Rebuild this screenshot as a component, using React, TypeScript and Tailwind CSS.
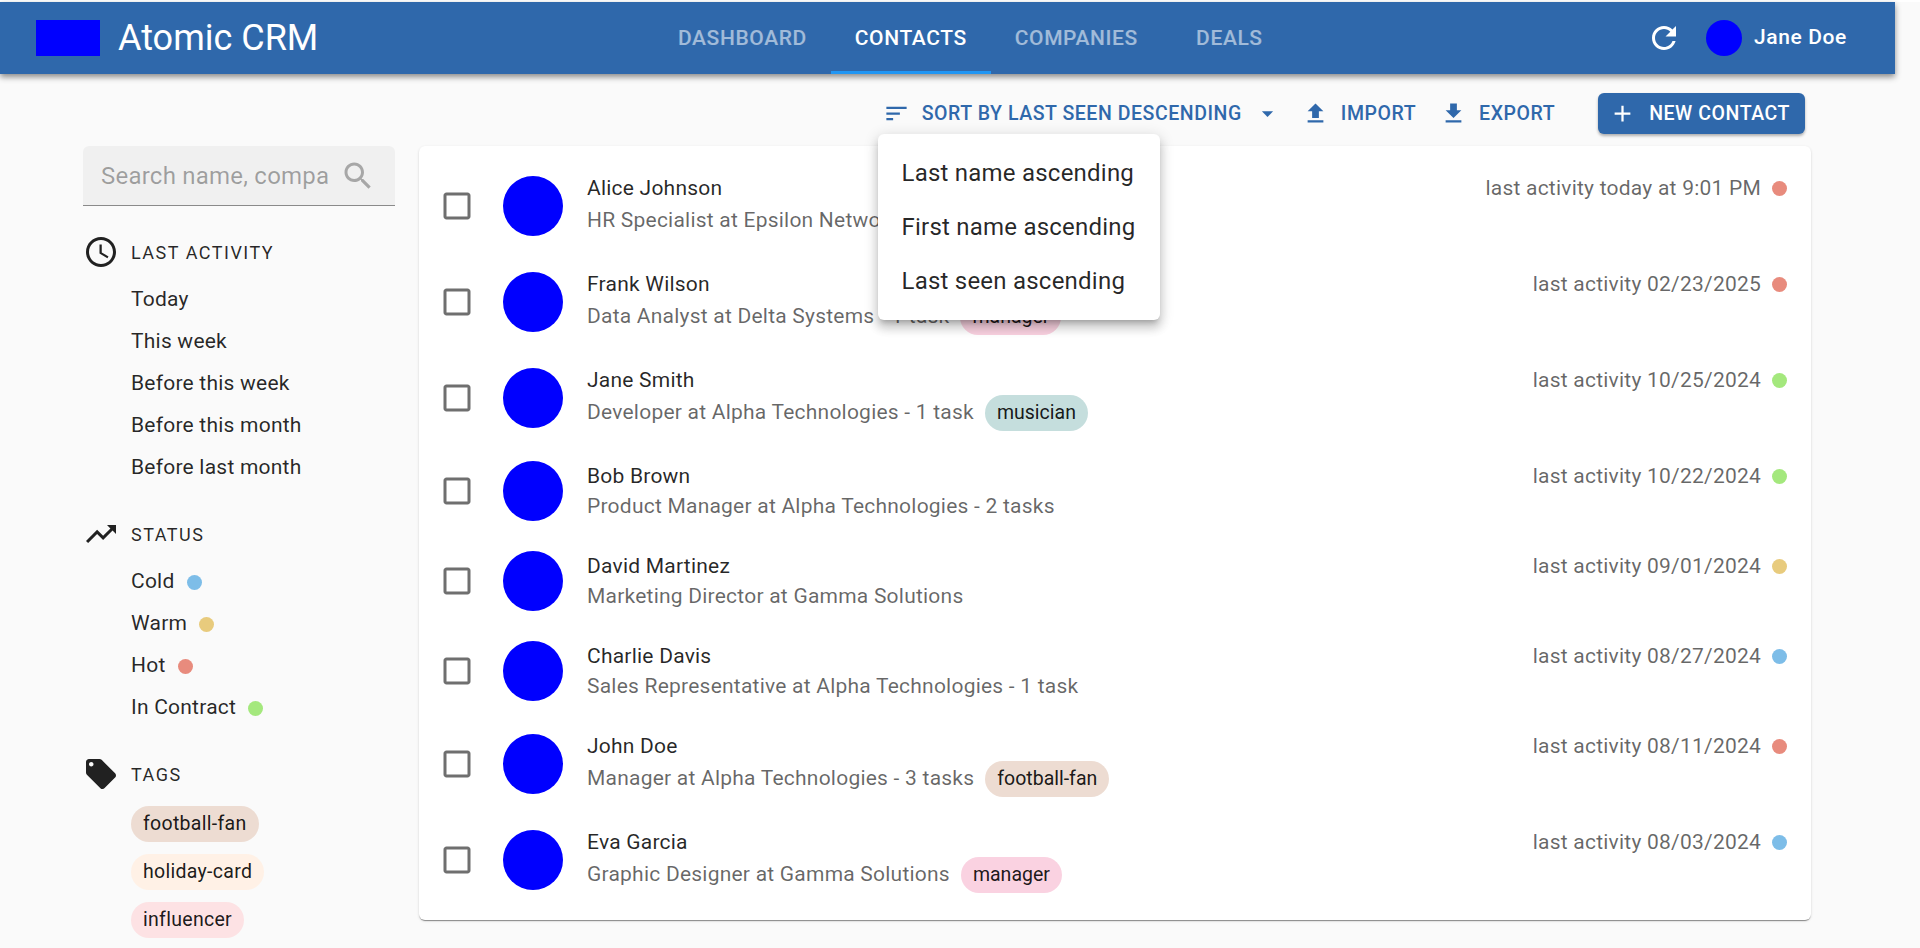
import React from "react";

const icons = {
  refresh: "M17.65 6.35C16.2 4.9 14.21 4 12 4c-4.42 0-7.99 3.58-7.99 8s3.57 8 7.99 8c3.73 0 6.84-2.55 7.73-6h-2.08c-.82 2.33-3.04 4-5.65 4-3.31 0-6-2.69-6-6s2.69-6 6-6c1.66 0 3.14.69 4.22 1.78L13 11h7V4l-2.35 2.35z",
  sort: "M3 18h6v-2H3v2zM3 6v2h18V6H3zm0 7h12v-2H3v2z",
  dropdown: "M7 10l5 5 5-5z",
  upload: "M9 16h6v-6h4l-7-7-7 7h4zm-4 2h14v2H5z",
  download: "M19 9h-4V3H9v6H5l7 7 7-7zM5 18v2h14v-2H5z",
  add: "M19 13h-6v6h-2v-6H5v-2h6V5h2v6h6v2z",
  search: "M15.5 14h-.79l-.28-.27C15.41 12.59 16 11.11 16 9.5 16 5.91 13.09 3 9.5 3S3 5.91 3 9.5 5.91 16 9.5 16c1.61 0 3.09-.59 4.23-1.57l.27.28v.79l5 4.99L20.49 19l-4.99-5zm-6 0C7.01 14 5 11.99 5 9.5S7.01 5 9.5 5 14 7.01 14 9.5 11.99 14 9.5 14z",
  checkbox: "M19 5v14H5V5h14m0-2H5c-1.1 0-2 .9-2 2v14c0 1.1.9 2 2 2h14c1.1 0 2-.9 2-2V5c0-1.1-.9-2-2-2z",
  clock: "M11.99 2C6.47 2 2 6.48 2 12s4.47 10 9.99 10C17.52 22 22 17.52 22 12S17.52 2 11.99 2zM12 20c-4.42 0-8-3.58-8-8s3.58-8 8-8 8 3.58 8 8-3.58 8-8 8zm.5-13H11v6l5.25 3.15.75-1.23-4.5-2.67z",
  trending: "M16 6l2.29 2.29-4.88 4.88-4-4L2 16.59 3.41 18l6-6 4 4 6.3-6.29L22 12V6z",
  tag: "M21.41 11.58l-9-9C12.05 2.22 11.55 2 11 2H4c-1.1 0-2 .9-2 2v7c0 .55.22 1.05.59 1.42l9 9c.36.36.86.58 1.41.58.55 0 1.05-.22 1.41-.59l7-7c.37-.36.59-.86.59-1.41 0-.55-.23-1.06-.59-1.42zM5.5 7C4.67 7 4 6.33 4 5.5S4.67 4 5.5 4 7 4.67 7 5.5 6.33 7 5.5 7z",
};

const Icon = ({ name, className }: { name: keyof typeof icons; className?: string }) => (
  <svg viewBox="0 0 24 24" fill="currentColor" className={className}>
    <path d={icons[name]} />
  </svg>
);

const Dot = ({ color }: { color: string }) => (
  <span className={`inline-block w-[15px] h-[15px] rounded-full shrink-0 ${color}`} />
);

const Chip = ({ label, color, className }: { label: string; color: string; className?: string }) => (
  <span className={`inline-flex items-center h-9 px-3 rounded-full text-[19.5px] text-black/90 ${color} ${className ?? ""}`}>{label}</span>
);

const COLD = "bg-[#7dbde8]";
const WARM = "bg-[#e8cb7d]";
const HOT = "bg-[#e88b7d]";
const CONTRACT = "bg-[#a4e87d]";

const contacts = [
  { name: "Alice Johnson", sub: "HR Specialist at Epsilon Networks", when: "last activity today at 9:01 PM", dot: HOT, tall: true },
  { name: "Frank Wilson", sub: "Data Analyst at Delta Systems - 1 task", when: "last activity 02/23/2025", dot: HOT, tag: "manager", tagColor: "bg-[#fad2e1]", tall: true },
  { name: "Jane Smith", sub: "Developer at Alpha Technologies - 1 task", when: "last activity 10/25/2024", dot: CONTRACT, tag: "musician", tagColor: "bg-[#c5dedd]", tall: true },
  { name: "Bob Brown", sub: "Product Manager at Alpha Technologies - 2 tasks", when: "last activity 10/22/2024", dot: CONTRACT },
  { name: "David Martinez", sub: "Marketing Director at Gamma Solutions", when: "last activity 09/01/2024", dot: WARM },
  { name: "Charlie Davis", sub: "Sales Representative at Alpha Technologies - 1 task", when: "last activity 08/27/2024", dot: COLD },
  { name: "John Doe", sub: "Manager at Alpha Technologies - 3 tasks", when: "last activity 08/11/2024", dot: HOT, tag: "football-fan", tagColor: "bg-[#eddcd2]", tall: true },
  { name: "Eva Garcia", sub: "Graphic Designer at Gamma Solutions", when: "last activity 08/03/2024", dot: COLD, tag: "manager", tagColor: "bg-[#fad2e1]", tall: true },
];

const tabs = ["Dashboard", "Contacts", "Companies", "Deals"];

const TextButton = ({ icon, label }: { icon: keyof typeof icons; label: string }) => (
  <div className="flex items-center gap-3 text-[#2f68ab]">
    <Icon name={icon} className="w-[27px] h-[27px]" />
    <span className="text-[19.5px] font-medium uppercase tracking-[0.02857em]">{label}</span>
  </div>
);

const SectionTitle = ({ icon, label }: { icon: keyof typeof icons; label: string }) => (
  <div className="flex items-center h-9 gap-3 text-[#212121]">
    <Icon name={icon} className="w-9 h-9 shrink-0" />
    <span className="text-[18px] uppercase tracking-[0.08333em] text-black/85">{label}</span>
  </div>
);

const FilterItem = ({ label, dot }: { label: string; dot?: string }) => (
  <div className="flex items-center gap-3 h-[42px] pl-[48px] text-[21px] text-black/85 tracking-[0.01071em]">
    {label}
    {dot && <Dot color={dot} />}
  </div>
);

export default function App() {
  return (
    <div className="relative h-[948px] overflow-hidden bg-[#fafafa] font-['Roboto',sans-serif]">
      <div className="h-[2px] bg-white" />
      <header className="flex items-center h-[72px] w-[1895px] bg-[#2f68ab] text-white shadow-[0_3px_6px_rgba(0,0,0,0.45)]">
        <div className="flex items-center w-[654px] shrink-0 pl-9 gap-[18px]">
          <div className="w-16 h-9 bg-[#0000ff]" />
          <span className="text-[36px] leading-none">Atomic CRM</span>
        </div>
        <nav className="flex h-full">
          {tabs.map((t) => (
            <div
              key={t}
              className={
                t === "Contacts"
                  ? "flex items-center justify-center min-w-[135px] px-6 text-[21px] font-medium uppercase tracking-[0.02857em] text-white border-b-[3px] border-[#2196f3] pt-1"
                  : "flex items-center justify-center min-w-[135px] px-6 text-[21px] font-medium uppercase tracking-[0.02857em] text-white/55 border-b-[3px] border-transparent pt-1"
              }
            >
              {t}
            </div>
          ))}
        </nav>
        <div className="flex items-center ml-auto pr-[48px]">
          <Icon name="refresh" className="w-9 h-9 text-white" />
          <div className="w-9 h-9 rounded-full bg-[#0000ff] ml-6" />
          <span className="ml-3 text-[21px] font-medium tracking-[0.03em]">Jane Doe</span>
        </div>
      </header>

      <main className="pl-[83px] w-[1811px]">
        <div className="flex items-center justify-end gap-6 pt-[19px] pr-[6px] h-[60px]">
          <div className="flex items-center -mr-[3px] text-[#2f68ab]">
            <Icon name="sort" className="w-[27px] h-[27px]" />
            <span className="ml-3 text-[19.5px] font-medium uppercase tracking-[0.02857em]">Sort by last seen descending</span>
            <Icon name="dropdown" className="ml-3 w-[27px] h-[27px]" />
          </div>
          <TextButton icon="upload" label="Import" />
          <TextButton icon="download" label="Export" />
          <div className="flex items-center h-[41px] ml-[19px] pl-[11px] pr-[15px] rounded-md bg-[#2f68ab] text-white shadow-[0_2px_3px_rgba(0,0,0,0.3)]">
            <Icon name="add" className="w-[27px] h-[27px]" />
            <span className="ml-[13px] text-[19.5px] font-medium uppercase tracking-[0.02857em]">New contact</span>
          </div>
        </div>

        <div className="flex items-start gap-6 mt-3">
          <aside className="w-[312px] shrink-0">
            <div className="flex items-center h-[60px] pl-[18px] pr-[19px] bg-[#f0f0f0] rounded-t-md border-b-[1.5px] border-[#8a8a8a]">
              <input
                readOnly
                placeholder="Search name, company..."
                className="flex-1 min-w-0 bg-transparent outline-none text-[24px] tracking-[0.00938em] placeholder:text-black/35"
              />
              <Icon name="search" className="w-9 h-9 ml-[11px] shrink-0 text-black/30" />
            </div>

            <div className="mt-[28px]">
              <SectionTitle icon="clock" label="Last activity" />
              <div className="mt-[9px]">
                {["Today", "This week", "Before this week", "Before this month", "Before last month"].map((l) => (
                  <FilterItem key={l} label={l} />
                ))}
              </div>
            </div>

            <div className="mt-[27px]">
              <SectionTitle icon="trending" label="Status" />
              <div className="mt-[9px]">
                <FilterItem label="Cold" dot={COLD} />
                <FilterItem label="Warm" dot={WARM} />
                <FilterItem label="Hot" dot={HOT} />
                <FilterItem label="In Contract" dot={CONTRACT} />
              </div>
            </div>

            <div className="mt-[27px]">
              <SectionTitle icon="tag" label="Tags" />
              <div className="flex flex-col items-start gap-3 mt-[14px] pl-[48px]">
                <Chip label="football-fan" color="bg-[#eddcd2]" className="tracking-[0.015em]" />
                <Chip label="holiday-card" color="bg-[#fff1e6]" className="tracking-[0.015em]" />
                <Chip label="influencer" color="bg-[#fde2e4]" className="tracking-[0.015em]" />
              </div>
            </div>
          </aside>

          <section className="flex-1 py-3 bg-white rounded-md shadow-[0_2px_1px_-1px_rgba(0,0,0,0.3),0_1px_1px_0_rgba(0,0,0,0.14),0_1px_3px_0_rgba(0,0,0,0.12)]">
            {contacts.map((c) => (
              <div key={c.name} className={c.tall ? "flex items-center h-24 pl-5" : "flex items-center h-[90px] pl-5"}>
                <Icon name="checkbox" className="w-9 h-9 shrink-0 text-[#6f6f6f]" />
                <div className="w-[60px] h-[60px] ml-7 rounded-full bg-[#0000ff] shrink-0" />
                <div className="flex-1 ml-6 self-start pt-[15px]">
                  <div className="h-[30px] leading-[30px] text-[21px] text-black/85 tracking-[0.01071em]">{c.name}</div>
                  <div className={c.tall ? "flex items-center gap-[11px] h-9 text-[21px] text-black/60 tracking-[0.01071em]" : "flex items-center h-8 text-[21px] text-black/60 tracking-[0.01071em]"}>
                    {c.sub}
                    {c.tag && <Chip label={c.tag} color={c.tagColor!} className="tracking-normal" />}
                  </div>
                </div>
                <div className="flex items-center gap-[11px] self-start h-[30px] mt-[15px] pr-6 text-[21px] text-black/60 tracking-[0.01071em]">
                  <span className="pt-[2px]">{c.when}</span>
                  <Dot color={c.dot} />
                </div>
              </div>
            ))}
          </section>
        </div>
      </main>

      <div className="absolute left-[878px] top-[134px] w-[282px] py-3 bg-white rounded-md shadow-[0_5px_5px_-3px_rgba(0,0,0,0.2),0_8px_10px_1px_rgba(0,0,0,0.14),0_3px_14px_2px_rgba(0,0,0,0.12)]">
        {["Last name ascending", "First name ascending", "Last seen ascending"].map((m) => (
          <div key={m} className="flex items-center h-[54px] pl-[23.5px] text-[24px] text-black/85 tracking-[0.00938em]">{m}</div>
        ))}
      </div>
    </div>
  );
}
